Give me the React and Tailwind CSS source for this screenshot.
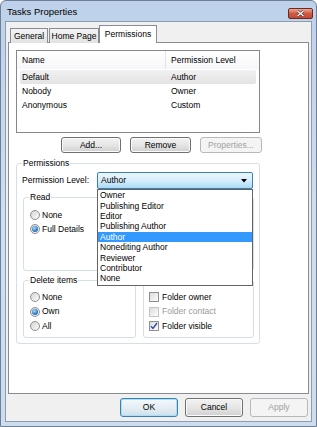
import React from 'react';

const levels = [
  'Owner',
  'Publishing Editor',
  'Editor',
  'Publishing Author',
  'Author',
  'Nonediting Author',
  'Reviewer',
  'Contributor',
  'None',
];

const people = [
  { name: 'Default', level: 'Author', selected: true },
  { name: 'Nobody', level: 'Owner' },
  { name: 'Anonymous', level: 'Custom' },
];

const Button = ({ children, className, kind = 'normal' }) => {
  const look =
    kind === 'default'
      ? 'border-[#3c7fb1] shadow-[inset_0_0_0_1px_#a8e0f8] bg-linear-to-b from-[#f4f9fc] via-[#e5eef4] to-[#d2dfe8] text-black'
      : kind === 'disabled'
      ? 'border-[#b5b9bc] bg-[#f4f4f4] text-[#a0a0a0]'
      : 'border-[#707070] shadow-[inset_0_0_0_1px_#fbfbfb] bg-linear-to-b from-[#f3f3f3] via-[#e6e6e6] to-[#d0d0d0] text-black';
  return (
    <div className={`flex items-center justify-center rounded-[3px] border ${look} ${className}`}>
      {children}
    </div>
  );
};

const Group = ({ label, className, children }) => (
  <div className={`relative rounded-[3px] border border-[#d5dfe5] ${className}`}>
    <span className="absolute -top-[6px] left-[5px] bg-white px-[1px] leading-[11px]">{label}</span>
    {children}
  </div>
);

const Radio = ({ label, checked, row }) => (
  <div className={`flex items-center gap-[2px] pl-[6px] ${row}`}>
    <span className="flex h-[10px] w-[10px] items-center justify-center rounded-full border border-[#8e8f8f] bg-linear-to-br from-[#d4d4d4] to-[#fdfdfd]">
      {checked && (
        <span className="h-[6px] w-[6px] rounded-full bg-[radial-gradient(circle_at_40%_35%,#a6e0fb,#2a74c4_60%,#1b4f96)]" />
      )}
    </span>
    <span>{label}</span>
  </div>
);

const Check = ({ label, checked, disabled }) => (
  <div className="flex h-[14.5px] items-center gap-[3px] pl-[5px]">
    <span
      className={`flex h-[10px] w-[10px] items-center justify-center border bg-linear-to-br from-[#dcdcdc] to-[#fdfdfd] ${
        disabled ? 'border-[#c4c4c4]' : 'border-[#8e8f8f]'
      }`}
    >
      {checked && (
        <svg width="8" height="8" viewBox="0 0 8 8">
          <path d="M1 4.2 L3 6.4 L7 1" fill="none" stroke="#2b4f9e" strokeWidth="1.4" />
        </svg>
      )}
    </span>
    <span className={disabled ? 'text-[#9a9a9a]' : ''}>{label}</span>
  </div>
);

export default function App() {
  return (
    <div className="flex h-[427px] w-[317px] flex-col rounded-t-[6px] border border-[#6f7f94] bg-linear-to-b from-[#bdd1ea] via-[#cfdef0] to-[#cddcee] px-[4px] pb-[4px] font-['Liberation_Sans',Arial,sans-serif] text-[8.5px] leading-[11px] text-black">
      {/* title bar */}
      <div className="flex h-[20px] items-start justify-between">
        <span className="pl-[2px] pt-[5px] text-[9.5px] leading-[12px]">Tasks Properties</span>
        <div className="mt-[7px] mr-[-1px] flex h-[11px] w-[25px] items-center justify-center rounded-[2px] border border-[#6a2a20] bg-linear-to-b from-[#e8a999] via-[#cf5a43] to-[#c24a34]">
          <svg width="9" height="7" viewBox="0 0 9 7">
            <path d="M1.5 1 L7.5 6 M7.5 1 L1.5 6" stroke="#5a2a22" strokeWidth="2.4" />
            <path d="M1.5 1 L7.5 6 M7.5 1 L1.5 6" stroke="#ffffff" strokeWidth="1.3" />
          </svg>
        </div>
      </div>

      {/* client area */}
      <div className="flex h-[401px] flex-col border border-[#8d9db1] bg-[#f0f0f0] px-[2px] pt-[3px]">
        {/* tabs */}
        <div className="relative z-10 -mb-px flex h-[18px] items-end pl-[2px]">
          <div className="flex h-[15px] w-[38px] items-center justify-center border border-b-0 border-[#898c95] bg-linear-to-b from-[#f4f4f4] to-[#e2e2e2]">
            General
          </div>
          <div className="ml-[1px] flex h-[15px] w-[50px] items-center justify-center border border-b-0 border-[#898c95] bg-linear-to-b from-[#f4f4f4] to-[#e2e2e2]">
            Home Page
          </div>
          <div className="flex h-[18px] w-[58px] items-start justify-center border border-b-0 border-[#898c95] bg-white pt-[3px]">
            Permissions
          </div>
        </div>

        {/* tab panel */}
        <div className="flex h-[352px] flex-col border border-[#898c95] bg-white">
          <div className="ml-[7px] mt-[7px] h-[83px] w-[244px] border border-[#828790] bg-white">
            <div className="flex h-[18px] items-center bg-linear-to-b from-white to-[#f6f7f9]">
              <div className="flex h-full w-[149px] items-center border-r border-[#e2e4e7] pl-[5px]">Name</div>
              <div className="pl-[5px]">Permission Level</div>
            </div>
            <div className="mt-[1px] px-[3px]">
              {people.map((p) => (
                <div
                  key={p.name}
                  className={`flex h-[14px] items-center ${
                    p.selected ? 'rounded-[2px] bg-linear-to-b from-[#f1f1f1] to-[#e3e3e3]' : ''
                  }`}
                >
                  <div className="w-[146px] pl-[2px]">{p.name}</div>
                  <div className="pl-[5px]">{p.level}</div>
                </div>
              ))}
            </div>
          </div>

          <div className="mt-[4px] flex w-[253px] justify-end gap-[9px]">
            <Button className="h-[16px] w-[60px]">Add...</Button>
            <Button className="h-[16px] w-[61px]">Remove</Button>
            <Button className="h-[16px] w-[62px]" kind="disabled">
              Properties...
            </Button>
          </div>

          <Group label="Permissions" className="ml-[7px] mt-[10px] h-[181px] w-[244px]">
            <div className="flex items-center pl-[5px] pt-[8px]">
              <span className="w-[75px]">Permission Level:</span>
              <div className="relative h-[17px] w-[156px]">
                <div className="flex h-full items-center justify-between rounded-[2px] border border-[#3c7fb1] bg-linear-to-b from-[#eaf6fd] via-[#d7effc] to-[#a9dbf6] pl-[3px] pr-[5px]">
                  <span>Author</span>
                  <svg width="6" height="4" viewBox="0 0 6 4">
                    <path d="M0 0 H6 L3 3.5 Z" fill="#000" />
                  </svg>
                </div>
                <div className="absolute left-0 top-full z-20 w-[156px] border border-[#646464] bg-white py-[0.5px]">
                  {levels.map((l) => (
                    <div
                      key={l}
                      className={`flex h-[10.4px] items-center pl-[2px] ${l === 'Author' ? 'bg-[#3399ff] text-white' : ''}`}
                    >
                      {l}
                    </div>
                  ))}
                </div>
              </div>
            </div>

            <div className="mt-[8px] grid grid-cols-[113px_111px] gap-x-[7px] gap-y-[9px] pl-[6px]">
              <Group label="Read" className="h-[74px] pt-[10px]">
                <Radio label="None" row="h-[14px]" />
                <Radio label="Full Details" checked row="h-[14px]" />
              </Group>
              <Group label="Write" className="h-[74px] pt-[10px]">
                <Check label="Create items" />
              </Group>
              <Group label="Delete items" className="h-[58px] pt-[9px]">
                <Radio label="None" row="h-[14.5px]" />
                <Radio label="Own" checked row="h-[14.5px]" />
                <Radio label="All" row="h-[14.5px]" />
              </Group>
              <Group label="Other" className="h-[58px] pt-[9px]">
                <Check label="Folder owner" />
                <Check label="Folder contact" disabled />
                <Check label="Folder visible" checked />
              </Group>
            </div>
          </Group>
        </div>

        {/* dialog buttons */}
        <div className="mt-[4px] flex justify-end gap-[7px] pr-[1px]">
          <Button className="h-[19px] w-[58px]" kind="default">
            OK
          </Button>
          <Button className="h-[19px] w-[58px]">Cancel</Button>
          <Button className="h-[19px] w-[58px]" kind="disabled">
            Apply
          </Button>
        </div>
      </div>
    </div>
  );
}
